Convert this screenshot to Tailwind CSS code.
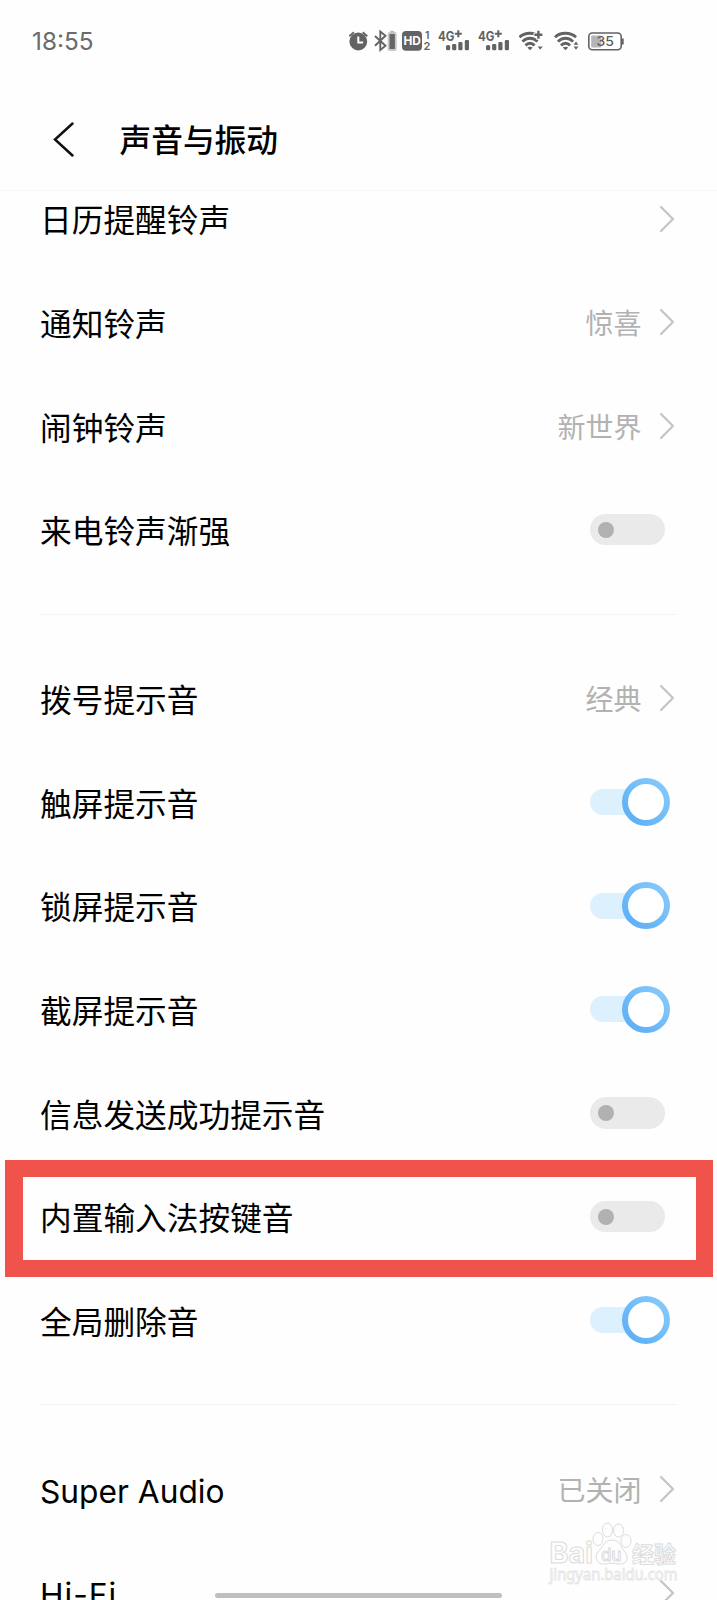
<!DOCTYPE html>
<html lang="zh-CN">
<head>
  <meta charset="UTF-8">
  <meta name="viewport" content="width=device-width, initial-scale=1.0">
  <title>声音与振动</title>
  <script src="https://cdn.jsdelivr.net/npm/@tailwindcss/browser@4"></script>
</head>
<body class="bg-[#fefefe]">
<div class="relative w-[717px] h-[1600px] overflow-hidden flex flex-col bg-[#fefefe] text-black font-['Inter','Noto_Sans_CJK_SC',sans-serif]">

  <!-- icons -->
  <svg class="hidden">
    <symbol id="chevron" viewBox="0 0 16 28">
      <path d="M2 2 L14 14 L2 26" fill="none" stroke="#c6c6c6" stroke-width="2.3" stroke-linecap="round" stroke-linejoin="round"/>
    </symbol>
    <symbol id="signal" viewBox="0 0 34 24">
      <text x="0" y="12.6" font-family="Inter" font-weight="700" font-size="13" textLength="16.4" lengthAdjust="spacingAndGlyphs" fill="#636363">4G</text>
      <path d="M16.8 5.5h7M20.3 2v7" stroke="#636363" stroke-width="2.1"/>
      <g fill="#636363">
        <rect x="8" y="16.6" width="4.2" height="5.4" rx="1.6"/>
        <rect x="14.1" y="15.6" width="4.2" height="6.4" rx="1.3"/>
        <rect x="20.3" y="13.8" width="4.2" height="8.2" rx="1.3"/>
        <rect x="26.8" y="11.6" width="4.2" height="10.4" rx="1.3"/>
      </g>
    </symbol>
    <symbol id="wifi" viewBox="0 0 26 22">
      <g fill="none" stroke="#636363" stroke-width="2.8">
        <path d="M1 8 C6 2.6 17 2.6 22 8"/>
        <path d="M4 12.3 C8 7.8 15 7.8 19 12.3"/>
        <path d="M7 16.2 C9.5 13.2 13.5 13.2 16 16.2"/>
      </g>
      <path d="M8.8 18.3 Q11.5 16.6 14.2 18.3 L11.5 21z" fill="#636363"/>
    </symbol>
  </svg>

  <!-- status bar -->
  <div class="h-20 shrink-0 flex items-center justify-between pl-8 pr-[77px]">
    <span class="text-[24.3px] leading-none text-[#6b6b6b] pt-0.5">18:55</span>
    <svg class="w-[300px] h-[45px] mt-[5px]" viewBox="340 20 300 45">
      <!-- alarm -->
      <circle cx="358.3" cy="41.5" r="8.9" fill="#636363"/>
      <path d="M349.3 36.2l4.6-3.9M367.3 36.2l-4.6-3.9" stroke="#636363" stroke-width="1.8"/>
      <path d="M358.3 36.5v6h4.8" fill="none" stroke="#fff" stroke-width="2"/>
      <!-- bluetooth -->
      <path d="M375 36l10.5 9.8-5.2 4.2V31.6l5.2 4.2L375 45.8" fill="none" stroke="#636363" stroke-width="1.9"/>
      <rect x="388.6" y="33" width="7.2" height="17" rx="1" fill="#666" stroke="#c9c9c9" stroke-width="1.8"/>
      <rect x="390.2" y="30.8" width="4" height="2" fill="#bbb"/>
      <!-- HD -->
      <rect x="402" y="31" width="20" height="19.8" rx="4" fill="#636363"/>
      <text x="403.4" y="45.2" font-family="Inter" font-weight="700" font-size="11.5" textLength="17.4" lengthAdjust="spacingAndGlyphs" fill="#fff">HD</text>
      <text x="424.9" y="39" font-family="Inter" font-weight="600" font-size="10.5" fill="#636363">1</text>
      <text x="423.6" y="50.2" font-family="Inter" font-weight="600" font-size="11" fill="#636363">2</text>
      <use href="#signal" x="438" y="28.3" width="34" height="24"/>
      <use href="#signal" x="478" y="28.3" width="34" height="24"/>
      <!-- wifi -->
      <use href="#wifi" x="518.5" y="29.3" width="26" height="22"/>
      <path d="M533.5 34.8h10M538.3 30.2v9.2" stroke="#fefefe" stroke-width="4.4"/>
      <path d="M534.4 34.8h8M538.4 30.8v8" stroke="#636363" stroke-width="2.4"/>
      <path d="M537.8 46.5h4.8l-2.4 3.2z" fill="#636363"/>
      <use href="#wifi" x="554" y="29.3" width="26" height="22"/>
      <path d="M573.6 44.8h4.8l-2.4-3.2zM573.6 46.6h4.8l-2.4 3.2z" fill="#636363"/>
      <!-- battery -->
      <rect x="588.8" y="33" width="32.4" height="16.8" rx="3.5" fill="#fff" stroke="#636363" stroke-width="1.6"/>
      <rect x="591.2" y="35.4" width="10" height="12" rx="1" fill="#b5b5b5"/>
      <path d="M622.8 38.5v6" stroke="#636363" stroke-width="1.8"/>
      <text x="596.4" y="46.4" font-family="Inter" font-weight="500" font-size="13.4" textLength="17.4" lengthAdjust="spacingAndGlyphs" fill="#5c5c5c">35</text>
    </svg>
  </div>

  <!-- title bar -->
  <header class="h-[111px] shrink-0 flex items-center border-b border-[#f6f6f6] pl-[52px]">
    <svg class="w-6 h-9 mt-[7px]" viewBox="0 0 24 36">
      <path d="M20.5 2.5 L3 18.5 L20.5 34.5" fill="none" stroke="#111" stroke-width="2.5" stroke-linecap="round"/>
    </svg>
    <h1 class="ml-[43.5px] mt-[11px] text-[31.7px] leading-none font-medium">声音与振动</h1>
  </header>

  <!-- settings list -->
  <main class="flex-1 overflow-hidden">
    <div id="list" class="-mt-[24px] px-10"></div>
  </main>

  <!-- highlight frame -->
  <div class="absolute left-[5px] top-[1160px] w-[708px] h-[117px] border-[17px] border-l-[18px] border-[#f0524c]"></div>

  <!-- watermark -->
  <svg class="absolute left-[540px] top-[1515px] w-[145px] h-[75px]" viewBox="540 1515 145 75">
    <g fill="#fefefe" stroke="#dcdcdc" stroke-width="1">
      <ellipse cx="598" cy="1539" rx="5" ry="6.5"/>
      <ellipse cx="607.5" cy="1530" rx="5" ry="7"/>
      <ellipse cx="618.5" cy="1530.5" rx="5" ry="6.5"/>
      <ellipse cx="626" cy="1541" rx="5" ry="6.5"/>
      <path d="M612 1540 C620 1540 621 1548 625 1552 C630 1558 626 1565 619 1564 C614 1563 610 1563 605 1564 C597 1565 594 1557 598 1552 C603 1547 604 1540 612 1540z"/>
      <text x="549.5" y="1563" font-family="Inter" font-weight="700" font-size="28" textLength="43.5" lengthAdjust="spacingAndGlyphs">Bai</text>
      <text x="601" y="1560.5" font-family="Inter" font-weight="500" font-size="17" textLength="20.5">du</text>
      <text x="632" y="1561.5" font-family="Noto Sans CJK SC" font-weight="700" font-size="22" textLength="44">经验</text>
    </g>
    <text x="549.5" y="1580" font-family="Noto Sans" font-size="15.5" textLength="128" lengthAdjust="spacingAndGlyphs" fill="#fefefe" stroke="#e4e4e4" stroke-width="0.8">jingyan.baidu.com</text>
  </svg>

  <!-- home indicator -->
  <div class="absolute left-[215px] top-[1593px] w-[287px] h-[5px] rounded-full bg-[#bfbfbf]"></div>
</div>

<script>
  const groups = [
    [['日历提醒铃声', ''], ['通知铃声', '惊喜'], ['闹钟铃声', '新世界'], ['来电铃声渐强', false]],
    [['拨号提示音', '经典'], ['触屏提示音', true], ['锁屏提示音', true], ['截屏提示音', true],
     ['信息发送成功提示音', false], ['内置输入法按键音', false], ['全局删除音', true]],
    [['Super Audio', '已关闭'], ['<span class="tracking-[1px]">Hi-Fi</span>', '']]
  ];

  const on = `<span class="flex items-center mr-[7.5px]">
      <span class="w-14 h-[26px] rounded-l-full bg-[#ddf0fe]"></span>
      <span class="-ml-6 size-[47.5px] rounded-full p-[6px] bg-linear-to-tr from-[#57abf5] to-[#8bcdfb]"><span class="block size-full rounded-full bg-white"></span></span>
    </span>`;
  const off = `<span class="flex items-center w-[75.5px] h-[31.5px] mr-[11.7px] pl-2 rounded-full bg-[#eaeaea]">
      <span class="size-4 rounded-full bg-[#b1b1b1]"></span>
    </span>`;

  function control(v) {
    if (v === true) return on;
    if (v === false) return off;
    return `<span class="flex items-center">
      <span class="text-[28px] leading-none text-[#b2b2b2] mr-[17.5px] pt-1">${v}</span>
      <svg class="w-4 h-7 mr-0.5"><use href="#chevron"/></svg>
    </span>`;
  }

  document.getElementById('list').innerHTML = groups.map(rows =>
    rows.map(([label, v]) => `<div class="h-[103.65px] flex items-center justify-between">
      <span class="text-[31.7px] leading-none pt-[5px]">${label}</span>${control(v)}
    </div>`).join('')
  ).join('<hr class="my-8 border-[#f4f4f4]">');
</script>
</body>
</html>
